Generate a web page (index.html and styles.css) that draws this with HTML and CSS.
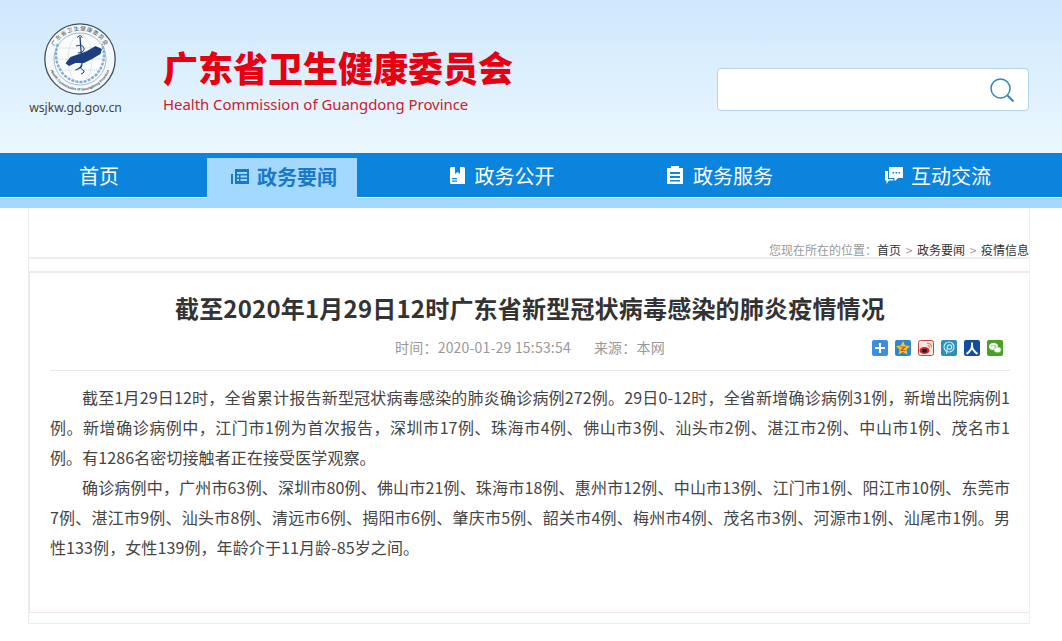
FILE: index.html
```html
<!DOCTYPE html>
<html lang="zh-CN">
<head>
    <meta charset="UTF-8">
    <title>截至2020年1月29日12时广东省新型冠状病毒感染的肺炎疫情情况</title>
    <link rel="stylesheet" href="styles.css">
</head>
<body>
    <!-- Header -->
    <div class="header">
        <div class="logo">
            <svg class="seal" width="72" height="74" viewBox="0 0 72 74">
                <defs>
                    <path id="sealTop" d="M7.500 37a28.500 28.500 0 0 1 57 0"/>
                    <path id="sealBottom" d="M4.500 37a31.500 31.500 0 0 0 63 0"/>
                </defs>
                <circle cx="36" cy="37" r="35.200" fill="#f4f8fb" stroke="#3f4f5e" stroke-width="1.300"/>
                <circle cx="36" cy="37" r="26" fill="#fafcfd" stroke="#8a9aa8" stroke-width=".7"/>
                <text class="seal-cn"><textPath href="#sealTop" startOffset="50%" text-anchor="middle">广东省卫生健康委员会</textPath></text>
                <text class="seal-en"><textPath href="#sealBottom" startOffset="50%" text-anchor="middle">Health Commission of Guangdong Province</textPath></text>
                <g fill="none" stroke="#cdd8e0" stroke-width=".6">
                    <ellipse cx="36" cy="37" rx="12" ry="24"/>
                    <path d="M12 37h48M15 26h42M15 48h42"/>
                </g>
                <path d="M14 22q-6 17 6 31q8 7 16 7t16-7q12-14 6-31" fill="none" stroke="#7fb0d4" stroke-width="2.400" stroke-dasharray="3 1.200"/>
                <path d="M21.500 41.300L26.500 35 35 32l8-3 8.500-5 6.500 3-1.500 5-8.500 5-8 4-8.500 0L25 44z" fill="#1c3f82"/>
                <path d="M36 15l2 26q0 5-6.500 7" stroke="#1c3f82" stroke-width="1.300" fill="none"/>
                <path d="M33 15.500l3-2 2.500 2M32 24q7-2 8 2t-6 5M38 44q-3 2 1 4q3 2-2 4" fill="none" stroke="#1c3f82" stroke-width="1"/>
            </svg>
            <div class="logo-url">wsjkw.gd.gov.cn</div>
        </div>
        <div class="site-name">
            <div class="site-cn">广东省卫生健康委员会</div>
            <div class="site-en">Health Commission of Guangdong Province</div>
        </div>
        <div class="search">
            <svg width="26" height="26" viewBox="0 0 26 26" fill="none" stroke="#2b88c4">
                <circle cx="11.500" cy="11.500" r="9.500" stroke-width="1.500"/>
                <path d="M18.500 18.500l6 6" stroke-width="2"/>
            </svg>
        </div>
    </div>

    <!-- Navigation -->
    <div class="nav">
        <a class="nav-item nav-home">首页</a>
        <a class="nav-item nav-active">
            <svg width="18" height="15" viewBox="0 0 18 15" fill="#1a78c8">
                <path d="M0 5h2v10H0zM4 0h14v15H4zM6 3v2h10V3zM6 6.500v2h2v-2zM9.500 6.500v2H16v-2zM6 10v2h2v-2zM9.500 10v2H16v-2z" fill-rule="evenodd"/>
            </svg>
            政务要闻
        </a>
        <a class="nav-item">
            <svg width="15" height="17" viewBox="0 0 15 17" fill="#fff">
                <path d="M0 1.500Q0 0 1.500 0H5v7l2.500-2L10 7V0h3.500Q15 0 15 1.500V17H1.500Q0 17 0 15.500zM2 11v1.200h5V11zM2 13.500v1.200h5v-1.200z" fill-rule="evenodd"/>
            </svg>
            政务公开
        </a>
        <a class="nav-item">
            <svg width="16" height="18" viewBox="0 0 16 18" fill="#fff">
                <path d="M4 0h8v2h4v16H0V2h4zM3 6v2h10V6zM3 10v2h10v-2zM3 14v1.500h10V14z" fill-rule="evenodd"/>
            </svg>
            政务服务
        </a>
        <a class="nav-item nav-last">
            <svg width="18" height="17" viewBox="0 0 18 17" fill="#fff">
                <path d="M4 0h14v11h-5l-3 3-1-3H4zM7.500 5v1.600h1.600V5zM10.500 5v1.600h1.600V5zM13.500 5v1.600h1.600V5z" fill-rule="evenodd"/>
                <path d="M0 4h3v8h5l.6 1.600H4L1.500 17v-3.400H0z"/>
            </svg>
            互动交流
        </a>
    </div>
    <div class="nav-band"></div>

    <!-- Article -->
    <div class="frame">
        <div class="crumbs">您现在所在的位置：<a>首页</a><span class="sep">&gt;</span><a>政务要闻</a><span class="sep">&gt;</span><a>疫情信息</a></div>
        <div class="card">
            <h1>截至2020年1月29日12时广东省新型冠状病毒感染的肺炎疫情情况</h1>
            <div class="meta">
                <div class="meta-text"><span>时间：2020-01-29 15:53:54</span><span>来源：本网</span></div>
                <div class="share">
                    <svg width="16" height="16" viewBox="0 0 16 16"><rect width="16" height="16" rx="2" fill="#3d8ee0"/><path d="M7 3h2v4h4v2H9v4H7V9H3V7h4z" fill="#fff"/></svg>
                    <svg width="16" height="16" viewBox="0 0 16 16"><rect width="16" height="16" rx="2" fill="#2f86c8"/><path d="M8 1l2.100 4.500 5 .6-3.700 3.400 1 4.900L8 12l-4.400 2.400 1-4.900L.9 6.100l5-.6z" fill="#f7c623"/><path d="M5.500 6.500h5v1L7.500 10h3v1h-5v-1l3-2.500h-3z" fill="#c9541c"/></svg>
                    <svg width="16" height="16" viewBox="0 0 16 16"><rect x=".5" y=".5" width="15" height="15" rx="2" fill="#f6e9e4" stroke="#c8473c"/><ellipse cx="6.500" cy="10.500" rx="5" ry="3.500" fill="#d8232a"/><ellipse cx="6.500" cy="10.700" rx="2.600" ry="2" fill="#222"/><path d="M9 3.500q4.500-.5 4.500 4M9.500 5.500q2-.2 2 2" fill="none" stroke="#f08a1d" stroke-width="1.200"/></svg>
                    <svg width="16" height="16" viewBox="0 0 16 16"><rect width="16" height="16" rx="2" fill="#2e8fb8"/><circle cx="8" cy="7" r="5" fill="none" stroke="#c7eaf5" stroke-width="1.200"/><circle cx="8.500" cy="7" r="2.200" fill="none" stroke="#c7eaf5" stroke-width="1.200"/><path d="M6.500 7l-1 7" stroke="#c7eaf5" stroke-width="1.200"/></svg>
                    <svg width="16" height="16" viewBox="0 0 16 16"><rect width="16" height="16" rx="2" fill="#124e9c"/><path d="M8 2.500v3.500q0 4-5.500 8M8 6q0 4 5.500 8" fill="none" stroke="#fff" stroke-width="2"/></svg>
                    <svg width="16" height="16" viewBox="0 0 16 16"><rect width="16" height="16" rx="2" fill="#46a323"/><ellipse cx="6.500" cy="6.500" rx="4.500" ry="3.600" fill="#fff"/><ellipse cx="10.500" cy="9.800" rx="3.800" ry="3" fill="#fff" stroke="#46a323" stroke-width=".6"/><circle cx="5" cy="5.800" r=".7" fill="#46a323"/><circle cx="8" cy="5.800" r=".7" fill="#46a323"/></svg>
                </div>
            </div>
            <div class="article">
                <p>截至1月29日12时，全省累计报告新型冠状病毒感染的肺炎确诊病例272例。29日0-12时，全省新增确诊病例31例，新增出院病例1例。新增确诊病例中，江门市1例为首次报告，深圳市17例、珠海市4例、佛山市3例、汕头市2例、湛江市2例、中山市1例、茂名市1例。有1286名密切接触者正在接受医学观察。</p>
                <p>确诊病例中，广州市63例、深圳市80例、佛山市21例、珠海市18例、惠州市12例、中山市13例、江门市1例、阳江市10例、东莞市7例、湛江市9例、汕头市8例、清远市6例、揭阳市6例、肇庆市5例、韶关市4例、梅州市4例、茂名市3例、河源市1例、汕尾市1例。男性133例，女性139例，年龄介于11月龄-85岁之间。</p>
            </div>
        </div>
        <div class="frame-foot"></div>
    </div>
</body>
</html>
```

FILE: styles.css
```css
body {
    margin: 0;
    background: #ffffff;
    font-family: "Noto Sans CJK SC", "Noto Sans", sans-serif;
    color: #333333;
}
a {
    color: inherit;
    text-decoration: none;
}

/* Header */
.header {
    height: 153px;
    box-sizing: border-box;
    display: flex;
    background: linear-gradient(#cfe8fd, #ebf7fe);
}
.logo {
    width: 93px;
    margin-left: 29px;
    padding-top: 22px;
    text-align: center;
}
.seal {
    display: block;
    margin-left: 15px;
}
.seal-cn {
    font-size: 5.500px;
    fill: #44525e;
    letter-spacing: .8px;
}
.seal-en {
    font-family: "Liberation Sans", sans-serif;
    font-size: 3.600px;
    font-weight: bold;
    fill: #44525e;
}
.logo-url {
    margin-top: 3px;
    font-family: "Noto Sans", sans-serif;
    font-size: 12.200px;
    line-height: 18px;
    color: #444444;
    white-space: nowrap;
}
.site-name {
    margin-left: 41px;
    padding-top: 42px;
}
.site-cn {
    font-size: 35px;
    line-height: 50px;
    font-weight: 900;
    color: #e60012;
    white-space: nowrap;
}
.site-en {
    margin-top: 1px;
    font-family: "Noto Sans", sans-serif;
    font-size: 14.900px;
    line-height: 22px;
    color: #c8202c;
    white-space: nowrap;
}
.search {
    width: 312px;
    height: 43px;
    box-sizing: border-box;
    margin: 68px 33px 0 auto;
    padding: 8px 13px 0 0;
    display: flex;
    justify-content: flex-end;
    background: #ffffff;
    border: 1px solid #b6d3e8;
    border-radius: 4px;
}

/* Navigation */
.nav {
    height: 45px;
    box-sizing: border-box;
    display: flex;
    background: #0a84dc;
    border-bottom: 1px solid #ffffff;
}
.nav-item {
    width: 218px;
    height: 44px;
    display: flex;
    align-items: center;
    justify-content: center;
    gap: 10px;
    font-size: 20px;
    color: #ffffff;
    white-space: nowrap;
}
.nav-home {
    width: 198px;
    margin-right: 9px;
}
.nav-active {
    width: 150px;
    height: 50px;
    margin: 5px 36px 0 0;
    padding: 0 0 14px 4px;
    box-sizing: border-box;
    gap: 8px;
    background: #a3d8ff;
    color: #1a78c8;
    font-weight: bold;
}
.nav-last {
    gap: 8px;
}
.nav-band {
    height: 10px;
    background: #a3d8ff;
}

/* Article */
.frame {
    width: 1002px;
    margin-left: 28px;
    box-sizing: border-box;
    border-left: 1px solid #e8edf1;
    border-right: 1px solid #eef1f4;
}
.crumbs {
    height: 51px;
    box-sizing: border-box;
    padding-top: 33px;
    font-size: 12px;
    line-height: 18px;
    text-align: right;
    color: #999999;
    border-bottom: 2px solid #ebeef0;
}
.crumbs a {
    color: #333333;
}
.sep {
    display: inline-block;
    width: 16px;
    text-align: center;
}
.card {
    height: 342px;
    box-sizing: border-box;
    margin-top: 12px;
    padding: 0 19px 0 20px;
    border-top: 2px solid #e8ebee;
    border-left: 1px solid #e4e9ed;
    border-bottom: 1px solid #efe6e6;
}
h1 {
    margin: 0;
    padding-top: 17px;
    font-size: 24px;
    line-height: 36px;
    font-weight: bold;
    letter-spacing: .2px;
    text-align: center;
    color: #333333;
}
.meta {
    height: 33px;
    margin-top: 11px;
    display: flex;
    justify-content: center;
    position: relative;
    border-bottom: 1px solid #e9e9e9;
}
.meta-text {
    font-size: 14px;
    line-height: 20px;
    letter-spacing: .2px;
    color: #999999;
    display: flex;
    gap: 23px;
}
.share {
    position: absolute;
    left: 822px;
    top: 3px;
    display: flex;
    gap: 7px;
}
.article {
    padding-top: 11px;
}
.article p {
    margin: 0;
    font-size: 16px;
    line-height: 30px;
    letter-spacing: .1px;
    text-indent: 2em;
    text-align: justify;
    color: #444444;
}
.frame-foot {
    height: 10px;
    border-bottom: 1px solid #e4eef0;
    background: #fdfefe;
}
```
